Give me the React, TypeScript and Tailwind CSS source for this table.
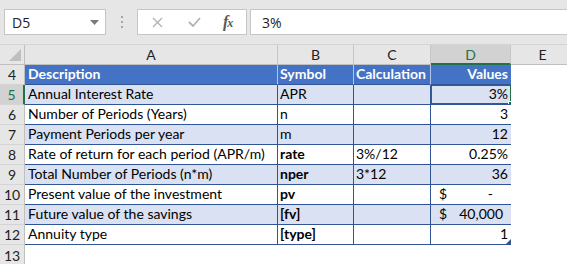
import React from "react";

const font = "font-['Lato','Liberation_Sans',sans-serif]";

type Row = {
  n: number;
  a: string;
  b: string;
  bBold?: boolean;
  c?: string;
  d?: string;
  acct?: string;
  band: boolean;
};

const rows: Row[] = [
  { n: 5, a: "Annual Interest Rate", b: "APR", d: "3%", band: true },
  { n: 6, a: "Number of Periods (Years)", b: "n", d: "3", band: false },
  { n: 7, a: "Payment Periods per year", b: "m", d: "12", band: true },
  { n: 8, a: "Rate of return for each period (APR/m)", b: "rate", bBold: true, c: "3%/12", d: "0.25%", band: false },
  { n: 9, a: "Total Number of Periods (n*m)", b: "nper", bBold: true, c: "3*12", d: "36", band: true },
  { n: 10, a: "Present value of the investment", b: "pv", bBold: true, acct: "-", band: false },
  { n: 11, a: "Future value of the savings", b: "[fv]", bBold: true, acct: "40,000", band: true },
  { n: 12, a: "Annuity type", b: "[type]", bBold: true, d: "1", band: false },
];

const FormulaBar = () => (
  <div className="h-[45px] bg-[#e6e6e6] flex items-start pt-[9px] pl-[4px] border-b border-[#d4d4d4]">
    <div className="w-[102px] h-[26px] bg-white border border-[#c6c6c6] flex items-center justify-between pl-[7px] pr-[6px]">
      <span className="font-['Open_Sans',sans-serif] text-[14px] text-[#222]">D5</span>
      <svg width="9" height="5" viewBox="0 0 9 5">
        <path d="M0 0h9L4.5 5z" fill="#7a7a7a" />
      </svg>
    </div>
    <div className="w-[31px] h-[26px] flex flex-col items-center justify-center gap-[3px]">
      <span className="w-[2px] h-[2px] bg-[#a6a6a6]" />
      <span className="w-[2px] h-[2px] bg-[#a6a6a6]" />
      <span className="w-[2px] h-[2px] bg-[#a6a6a6]" />
    </div>
    <div className="w-[110px] h-[26px] bg-white border border-[#c6c6c6] flex items-center">
      <svg className="ml-[14px]" width="11" height="11" viewBox="0 0 11 11">
        <path d="M1 1l9 9M10 1l-9 9" stroke="#b3b3b3" strokeWidth="1.4" />
      </svg>
      <svg className="ml-[25px]" width="13" height="10" viewBox="0 0 13 10">
        <path d="M1 5l4 4 7-8" stroke="#b3b3b3" strokeWidth="1.8" fill="none" />
      </svg>
      <span className="ml-[22px] font-['Liberation_Serif',serif] italic font-bold text-[16px] leading-none text-[#595959] tracking-[-1px]">
        f<span className="text-[12px]">x</span>
      </span>
    </div>
    <div className="ml-[3px] flex-1 h-[26px] bg-white border border-[#c6c6c6] border-r-0 flex items-center pl-[11px]">
      <span className="font-['Open_Sans',sans-serif] text-[14px] text-[#222]">3%</span>
    </div>
  </div>
);

const cell = `h-[20px] ${font} text-[14px] leading-none text-black flex items-end pb-[3px] overflow-hidden whitespace-nowrap`;
const tableBorder = "border-r border-b border-[#2f5597]";

export default function App() {
  return (
    <div className="w-[567px] h-[264px] overflow-hidden bg-white">
      <FormulaBar />
      <div className="grid grid-cols-[25px_253px_76px_77px_80px_1fr] grid-rows-[20px_repeat(10,20px)]">
        {/* column headers */}
        <div className="h-[20px] bg-[#e6e6e6] border-r border-b border-[#bfbfbf] flex items-end justify-end p-[3px]">
          <svg width="12" height="12" viewBox="0 0 12 12">
            <path d="M12 0v12H0z" fill="#bfbfbf" />
          </svg>
        </div>
        {["A", "B", "C"].map((h) => (
          <div
            key={h}
            className={`h-[20px] bg-[#e6e6e6] border-r border-b border-r-[#c6c6c6] border-b-[#bfbfbf] flex items-center justify-center ${font} text-[14px] text-[#222]`}
          >
            {h}
          </div>
        ))}
        <div className={`h-[20px] bg-[#d2d2d2] border-r border-r-[#c6c6c6] border-b-2 border-b-[#217346] flex items-center justify-center ${font} text-[14px] text-[#217346]`}>
          D
        </div>
        <div className={`h-[20px] bg-[#e6e6e6] border-b border-[#bfbfbf] flex items-center justify-center pr-[3px] ${font} text-[14px] text-[#222]`}>
          <span className="w-[64px] text-center border-r border-[#c6c6c6] h-[19px] flex items-center justify-center">E</span>
        </div>

        {/* row 4 header */}
        <div className={`h-[20px] bg-[#e6e6e6] border-r border-b border-r-[#bfbfbf] border-b-[#d4d4d4] flex items-center justify-center ${font} text-[14px] text-[#222]`}>
          4
        </div>
        <div className={`${cell} bg-[#4472c4] text-white font-bold pl-[3px] border-r border-b border-r-[#b4c6e7] border-b-[#2f5597]`}>Description</div>
        <div className={`${cell} bg-[#4472c4] text-white font-bold pl-[2px] border-r border-b border-r-[#b4c6e7] border-b-[#2f5597]`}>Symbol</div>
        <div className={`${cell} bg-[#4472c4] text-white font-bold pl-[2px] border-r border-b border-r-[#b4c6e7] border-b-[#2f5597]`}>Calculation</div>
        <div className={`${cell} bg-[#4472c4] text-white font-bold justify-end pr-[3px] border-b border-[#2f5597]`}>Values</div>
        <div />

        {rows.map((r) => {
          const bg = r.band ? "bg-[#d9e1f2]" : "bg-white";
          const sel = r.n === 5;
          return (
            <React.Fragment key={r.n}>
              <div
                className={`h-[20px] border-b border-b-[#d4d4d4] flex items-center justify-center ${font} text-[14px] ${
                  sel
                    ? "bg-[#d2d2d2] text-[#217346] border-r-2 border-r-[#217346]"
                    : "bg-[#e6e6e6] text-[#222] border-r border-r-[#bfbfbf]"
                }`}
              >
                {r.n}
              </div>
              <div className={`${cell} ${bg} ${tableBorder} pl-[3px]`}>{r.a}</div>
              <div className={`${cell} ${bg} ${tableBorder} pl-[2px] ${r.bBold ? "font-bold" : ""}`}>{r.b}</div>
              <div className={`${cell} ${bg} ${tableBorder} pl-[2px]`}>{r.c ?? ""}</div>
              <div className={`${cell} ${bg} border-b border-[#2f5597] relative ${r.acct ? "justify-between pl-[8px] pr-[8px]" : "justify-end pr-[3px]"}`}>
                {r.acct ? (
                  <>
                    <span>$</span>
                    <span className={r.acct === "-" ? "pr-[10px]" : ""}>{r.acct}</span>
                  </>
                ) : (
                  r.d
                )}
                {sel && (
                  <div className="absolute -top-[1px] -left-[1px] -right-[1px] -bottom-[1px] border-2 border-[#217346]">
                    <div className="absolute -right-[4px] -bottom-[4px] w-[6px] h-[6px] bg-[#217346] border border-white" />
                  </div>
                )}
                {r.n === 12 && (
                  <svg className="absolute right-0 bottom-0" width="5" height="5" viewBox="0 0 5 5">
                    <path d="M5 0v5H0z" fill="#2f5597" />
                  </svg>
                )}
              </div>
              <div className="border-l border-[#2f5597] -ml-[1px]" />
            </React.Fragment>
          );
        })}

        {/* row 13 */}
        <div className={`h-[20px] bg-[#e6e6e6] border-r border-[#bfbfbf] flex items-center justify-center ${font} text-[14px] text-[#222]`}>
          13
        </div>
        <div className="col-span-5" />
      </div>
    </div>
  );
}
